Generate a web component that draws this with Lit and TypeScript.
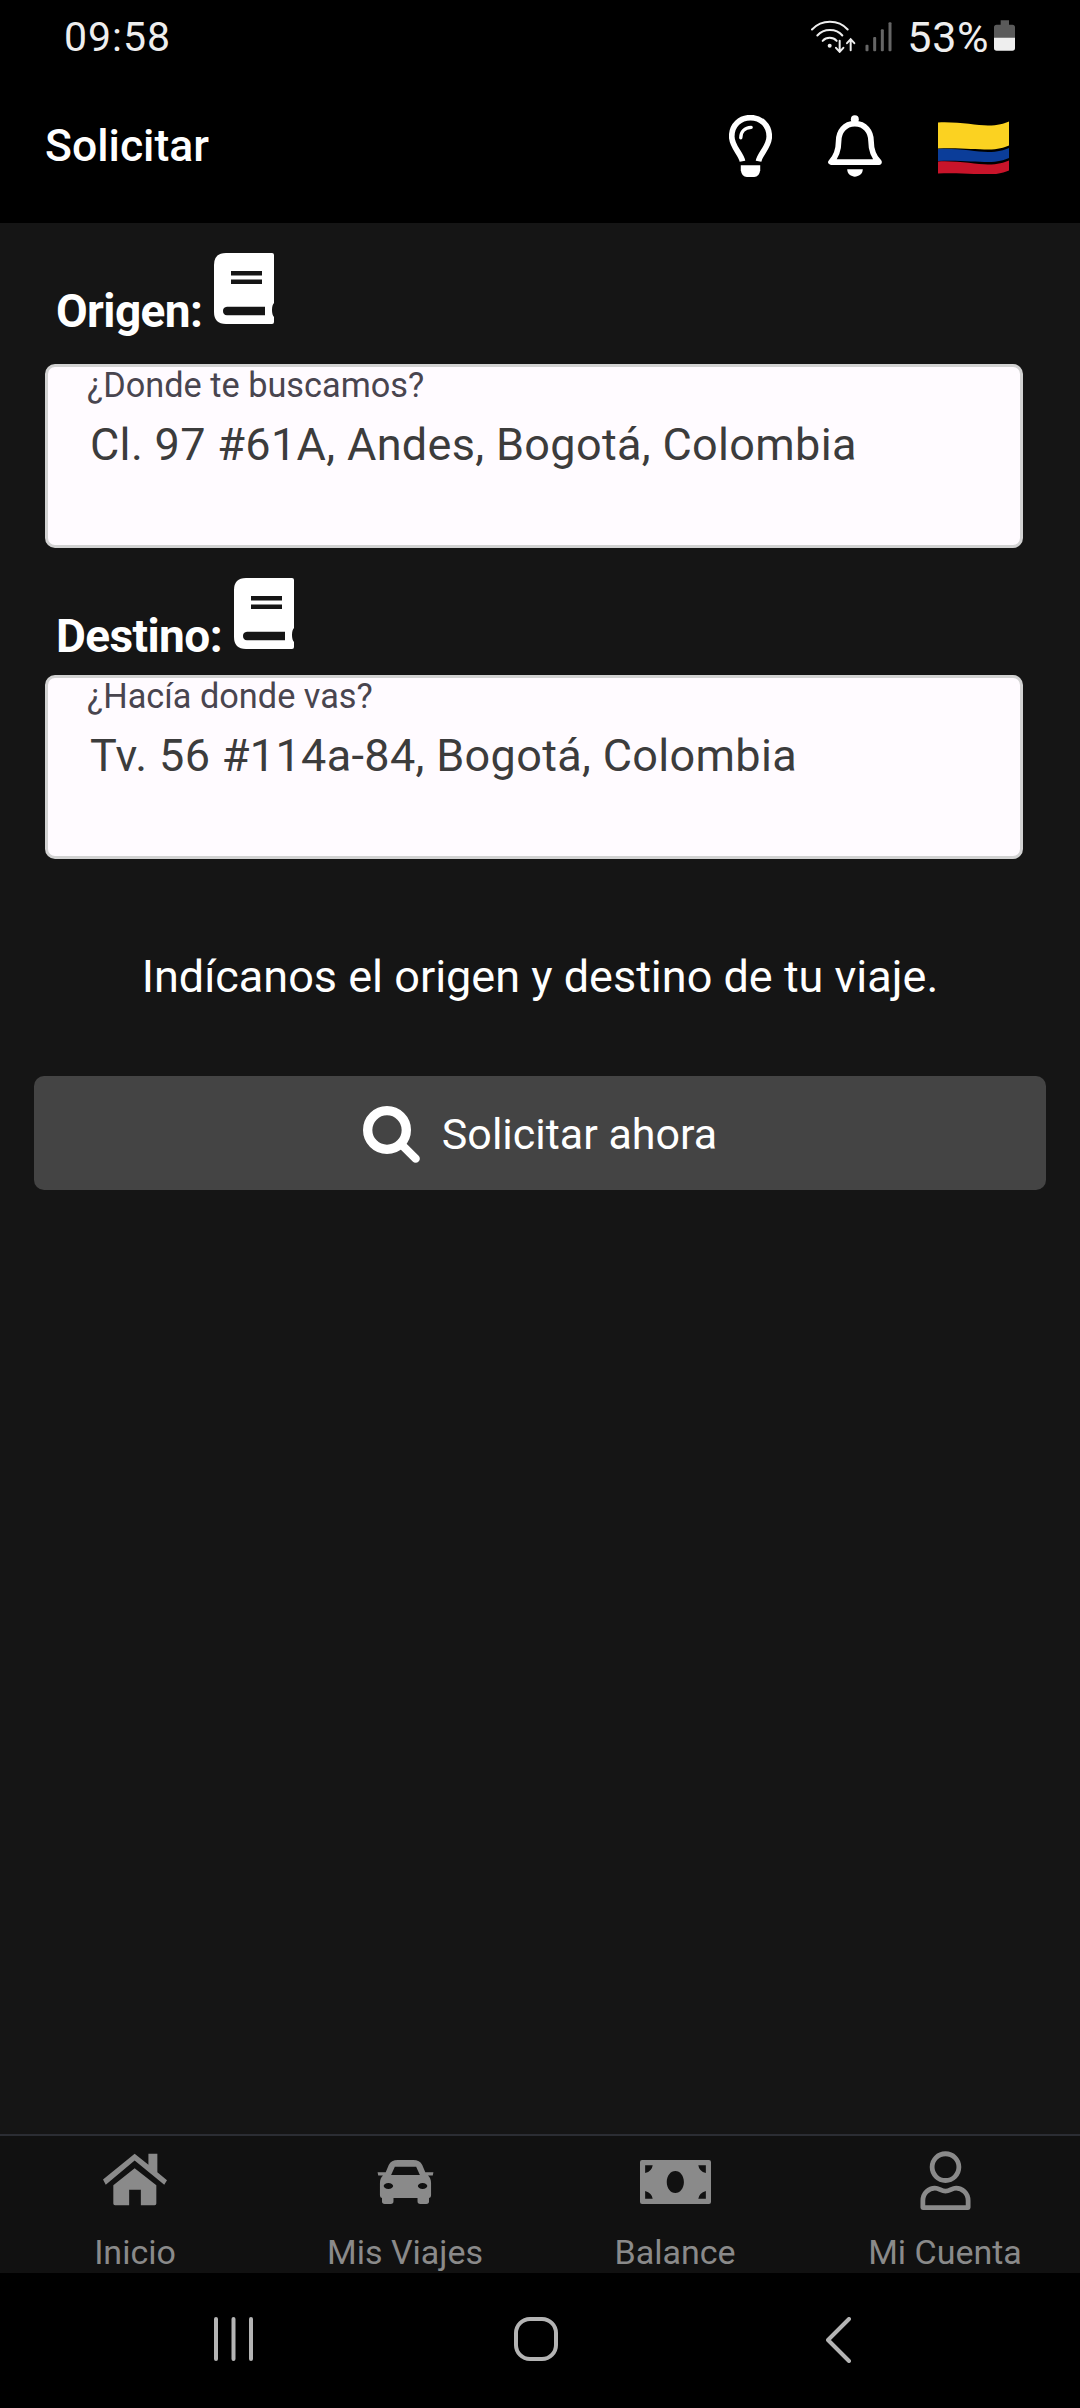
import { LitElement, html, svg, css } from 'lit';
import { customElement } from 'lit/decorators.js';

// one wavy band of the flag, y is the left edge, h the band height
const band = (y: number, h: number, fill: string) => {
  const wave = `M0 ${y + 1}C20 ${y} 38 ${y + 4} 50 ${y + 4}C60 ${y + 4} 66 ${y + 2} 71 ${y}`;
  const b = y + h;
  const back = `V${b - 3}C66 ${b - 1} 60 ${b + 1} 50 ${b + 1}C38 ${b + 1} 20 ${b - 1} 0 ${b}Z`;
  return svg`<path d="${wave}${back}" fill="${fill}" />`;
};

const bookIcon = html`<svg class="book" viewBox="0 0 60 71">
  <path
    fill="#fff"
    fill-rule="evenodd"
    d="M12 0H58Q60 0 60 2V50Q58 52 58 57 58 62 60 64V69Q60 71 58 71H12Q0 71 0 59V12Q0 0 12 0ZM17 18V22.5H48V18ZM17 26.5V31H48V26.5ZM13 53.7Q9 54 9 58 9 62 13 62.3H51V53.7Z"
  />
</svg>`;

const navItems = [
  {
    label: 'Inicio',
    icon: html`<svg class="ic-home" viewBox="0 0 186 150">
      <path
        fill="#8a8a8a"
        d="M0 75 92 0 132 32V0H158V54L186 77 178 90 92 20 8 90ZM30 92 92 42 155 92V145Q155 150 150 150H110V105H76V150H35Q30 150 30 145Z"
      />
    </svg>`,
  },
  {
    label: 'Mis Viajes',
    icon: html`<svg class="ic-car" viewBox="0 0 165 130">
      <path
        fill="#8a8a8a"
        fill-rule="evenodd"
        d="M33 15Q40 0 60 0H105Q125 0 132 15L141 36H165L163 46H149Q158 54 158 68V105Q158 112 152 112V122Q152 130 144 130H126Q118 130 118 122V112H47V122Q47 130 39 130H21Q13 130 13 122V112Q7 112 7 105V68Q7 54 16 46H2L0 36H24ZM51 20 40 44H125L114 20ZM32 68C24 68 18 73 18 77 18 81 24 86 32 86 40 86 46 81 46 77 46 73 40 68 32 68ZM133 68C125 68 119 73 119 77 119 81 125 86 133 86 141 86 147 81 147 77 147 73 141 68 133 68Z"
      />
    </svg>`,
  },
  {
    label: 'Balance',
    icon: html`<svg class="ic-money" viewBox="0 0 207 128">
      <path
        fill="#8a8a8a"
        fill-rule="evenodd"
        d="M6 0H201Q207 0 207 6V122Q207 128 201 128H6Q0 128 0 122V6Q0 0 6 0ZM15 15V38Q35 32 37 15ZM192 15H170Q172 32 192 38ZM15 113H37Q35 96 15 90ZM192 113V90Q172 96 170 113ZM103 32C89 32 78 46 78 64 78 82 89 96 103 96 117 96 128 82 128 64 128 46 117 32 103 32Z"
      />
    </svg>`,
  },
  {
    label: 'Mi Cuenta',
    icon: html`<svg class="ic-person" viewBox="0 0 146 172" fill="none" stroke="#8a8a8a" stroke-width="14">
      <circle cx="73" cy="47" r="39" />
      <path
        stroke-linejoin="round"
        d="M7 165V145C7 122 25 108 42 108 55 108 60 117 73 117 86 117 91 108 104 108 121 108 139 122 139 145V165Z"
      />
    </svg>`,
  },
];

@customElement('app-root')
export class AppRoot extends LitElement {
  static styles = css`
    :host {
      display: flex;
      flex-direction: column;
      width: 1080px;
      height: 2408px;
      background: #151515;
      font-family: Roboto, 'Noto Sans', sans-serif;
      color: #fff;
      overflow: hidden;
    }
    svg { display: block; flex: none; }

    .status {
      display: flex;
      align-items: flex-start;
      height: 74px;
      padding: 15px 65px 0 64px;
      box-sizing: border-box;
      background: #000;
      color: #eee;
      font-size: 41px;
      font-weight: 400;
      letter-spacing: 1px;
      line-height: 44px;
    }
    .status .time { flex: 1; }
    .status .pct { font-size: 43px; letter-spacing: 0.6px; }
    .ic-wifi { width: 45px; height: 33px; margin: 5px 9px 0 0; }
    .ic-signal { width: 27px; height: 30px; margin: 7px 15px 0 0; }
    .ic-battery { width: 21px; height: 31px; margin: 5px 0 0 5px; }

    .appbar {
      display: flex;
      align-items: center;
      height: 149px;
      padding: 0 71px 6px 45px;
      box-sizing: border-box;
      background: #000;
    }
    .appbar .title { flex: 1; font-size: 44.5px; font-weight: 500; }
    .ic-bulb { width: 43px; height: 62px; margin-right: 56px; }
    .ic-bell { width: 54px; height: 62px; margin-right: 56px; }
    .ic-flag { width: 71px; height: 53px; margin-top: 4px; }

    .main { flex: 1; display: flex; flex-direction: column; }
    .label-row {
      display: flex;
      align-items: flex-end;
      gap: 11px;
      padding-left: 56px;
      font-size: 46px;
      font-weight: 700;
      letter-spacing: -0.6px;
      line-height: 50px;
    }
    .label-row span { margin-bottom: -12px; }
    .label-row.first { margin-top: 30px; }
    .label-row.second { margin-top: 30px; }
    .book { width: 62px; height: 71px; }
    .field {
      height: 184px;
      margin: 40px 57px 0 45px;
      padding: 0 0 0 39px;
      box-sizing: border-box;
      background: #fffbff;
      border: 3px solid #d2d2d2;
      border-radius: 10px;
    }
    .label-row.second + .field { margin-top: 26px; }
    .field .hint { font-size: 34.3px; line-height: 36px; color: #49454f; }
    .field .value {
      margin: 14px 0 0 3px;
      font-size: 45px;
      line-height: 56px;
      color: #3c3c3c;
      letter-spacing: 0.33px;
    }
    .message {
      margin-top: 92px;
      text-align: center;
      font-size: 45px;
      line-height: 52px;
    }
    .submit {
      display: flex;
      align-items: center;
      justify-content: center;
      gap: 22px;
      height: 114px;
      margin: 73px 34px 0 34px;
      padding-top: 2px;
      box-sizing: border-box;
      background: #444;
      border-radius: 10px;
      font-size: 43px;
    }
    .ic-search { width: 57px; height: 57px; }

    .tabs {
      display: grid;
      grid-template-columns: repeat(4, 1fr);
      height: 139px;
      box-sizing: border-box;
      border-top: 2px solid #2b2d33;
      background: #111;
      color: #8a8a8a;
      font-size: 34px;
    }
    .tab { display: flex; flex-direction: column; align-items: center; }
    .tab .icon { height: 86px; display: flex; align-items: center; }
    .tab .name { line-height: 40px; margin-top: 10px; white-space: nowrap; }
    .ic-home { width: 64px; height: 53px; }
    .ic-car { width: 57px; height: 44px; margin-top: 5px; }
    .ic-money { width: 71px; height: 44px; margin-top: 5px; }
    .ic-person { width: 51px; height: 59px; margin-top: 2px; }

    .sysnav {
      display: flex;
      align-items: flex-start;
      height: 135px;
      padding: 44px 0 0 214px;
      box-sizing: border-box;
      background: #000;
    }
    .ic-recent { width: 39px; height: 44px; margin-right: 261px; }
    .ic-homebtn { width: 44px; height: 44px; margin-right: 268px; }
    .ic-back { width: 26px; height: 46px; }
  `;

  render() {
    return html`
      <div class="status">
        <span class="time">09:58</span>
        <svg class="ic-wifi" viewBox="0 0 135 98" fill="none" stroke="#eee" stroke-width="6" stroke-linecap="round">
          <path d="M3 28C32 -3 82 -3 110 28" />
          <path d="M19 46C38 24 76 24 94 46" />
          <path d="M35 62C46 50 66 50 77 62" />
          <circle cx="56" cy="77" r="6" fill="#eee" stroke="none" />
          <path d="M86 62V94M75 83 86 95 97 83" />
          <path d="M119 90V58M108 69 119 57 130 69" />
        </svg>
        <svg class="ic-signal" viewBox="0 0 80 90" fill="#666">
          <rect x="1" y="68" width="9" height="20" rx="3" />
          <rect x="24" y="45" width="9" height="43" rx="3" />
          <rect x="47" y="22" width="9" height="66" rx="3" />
          <rect x="70" y="1" width="9" height="87" rx="3" />
        </svg>
        <span class="pct">53%</span>
        <svg class="ic-battery" viewBox="0 0 63 91">
          <path fill="#5a5a5a" d="M20 0H45V13H55Q63 13 63 21V55H0V21Q0 13 8 13H20Z" />
          <path fill="#eee" d="M0 52H63V83Q63 91 55 91H8Q0 91 0 83Z" />
        </svg>
      </div>

      <div class="appbar">
        <span class="title">Solicitar</span>
        <svg class="ic-bulb" viewBox="0 0 128 185" fill="none" stroke="#fff">
          <path stroke-width="17" d="M40 138C36 115 8 95 8 64 8 30 33 8 64 8 95 8 120 30 120 64 120 95 92 115 88 138" />
          <path stroke-width="10" stroke-linecap="round" d="M35 68C35 50 47 38 66 37" />
          <path fill="#fff" stroke="none" d="M35 150H93V165Q90 185 75 185H53Q38 185 35 165Z" />
        </svg>
        <svg class="ic-bell" viewBox="0 0 163 185">
          <circle cx="81" cy="12" r="12" fill="#fff" />
          <path
            fill="none"
            stroke="#fff"
            stroke-width="17"
            stroke-linejoin="round"
            d="M9 141H154C138 125 130 105 130 78 130 50 112 25 81 25 50 25 32 50 32 78 32 105 24 125 9 141Z"
          />
          <path fill="#fff" d="M58 163H105C105 178 92 185 81 185 70 185 58 178 58 163Z" />
        </svg>
        <svg class="ic-flag" viewBox="0 0 71 53">
          ${band(0.5, 27, '#fbd221')} ${band(27, 13, '#0b3d99')} ${band(39.5, 13, '#c8142a')}
        </svg>
      </div>

      <div class="main">
        <div class="label-row first"><span>Origen:</span>${bookIcon}</div>
        <div class="field">
          <div class="hint">¿Donde te buscamos?</div>
          <div class="value">Cl. 97 #61A, Andes, Bogotá, Colombia</div>
        </div>
        <div class="label-row second"><span>Destino:</span>${bookIcon}</div>
        <div class="field">
          <div class="hint">¿Hacía donde vas?</div>
          <div class="value">Tv. 56 #114a-84, Bogotá, Colombia</div>
        </div>
        <div class="message">Indícanos el origen y destino de tu viaje.</div>
        <div class="submit">
          <svg class="ic-search" viewBox="0 0 171 171" fill="none" stroke="#fff">
            <circle cx="72" cy="72" r="58" stroke-width="28" />
            <path stroke-width="25" stroke-linecap="round" d="M118 118 158 158" />
          </svg>
          <span>Solicitar ahora</span>
        </div>
      </div>

      <div class="tabs">
        ${navItems.map(
          (item) => html`<div class="tab">
            <div class="icon">${item.icon}</div>
            <div class="name">${item.label}</div>
          </div>`,
        )}
      </div>

      <div class="sysnav">
        <svg class="ic-recent" viewBox="0 0 39 44" stroke="#b4b4b4" stroke-width="4" stroke-linecap="round">
          <path d="M2 2V42M19.5 2V42M37 2V42" />
        </svg>
        <svg class="ic-homebtn" viewBox="0 0 44 44" fill="none" stroke="#b4b4b4" stroke-width="4">
          <rect x="2" y="2" width="40" height="40" rx="14" />
        </svg>
        <svg class="ic-back" viewBox="0 0 26 46" fill="none" stroke="#b4b4b4" stroke-width="4" stroke-linecap="round" stroke-linejoin="round">
          <path d="M23 2 2 23 23 44" />
        </svg>
      </div>
    `;
  }
}
